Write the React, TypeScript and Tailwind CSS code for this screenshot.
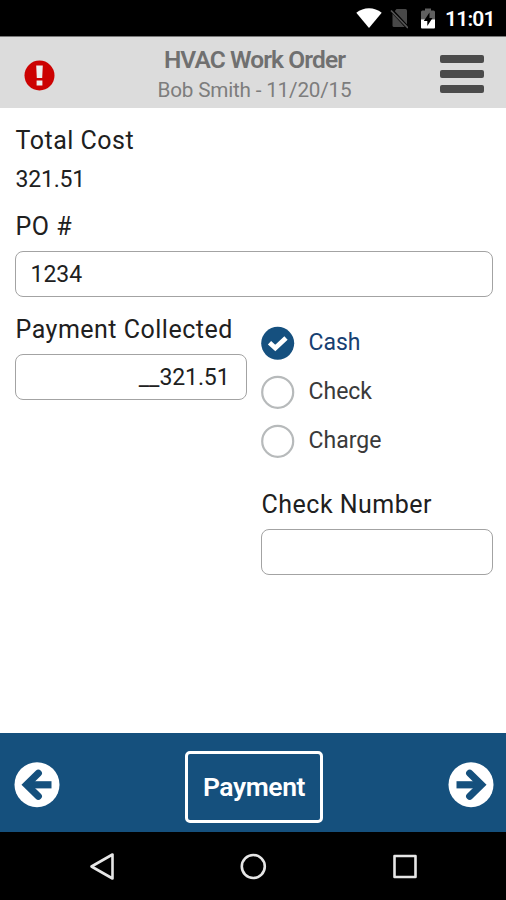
import React from "react";

interface PaymentOption {
  label: string;
  selected: boolean;
}

const paymentOptions: PaymentOption[] = [
  { label: "Cash", selected: true },
  { label: "Check", selected: false },
  { label: "Charge", selected: false },
];

function StatusBar() {
  return (
    <div className="flex h-9 shrink-0 bg-black pl-[356px] text-white">
      {/* Wifi */}
      <svg className="mt-2 h-5 w-[26px]" viewBox="0 0 26 20" fill="#fff">
        <path d="M13 20 0.3 4.8C4 1.8 8.300 0.300 13 0.300S22 1.800 25.700 4.800Z" />
      </svg>
      {/* No SIM */}
      <svg className="mt-2 ml-2 h-[21px] w-[18px]" viewBox="0 0 18 21">
        <path d="M6.500 1H15.500Q17 1 17 2.500V17.500Q17 19 15.500 19H4Q2.500 19 2.500 17.500V6Z" fill="#484848" />
        <path d="M0 0.500 18 20" stroke="#000" strokeWidth="3.500" />
        <path d="M1 2.500 18 20" stroke="#555" strokeWidth="1.700" />
      </svg>
      {/* Battery */}
      <svg className="mt-2 ml-3 h-[21px] w-4" viewBox="0 0 16 21">
        <path d="M5 0.500H11V2.500H13.500Q15 2.500 15 4V12H1V4Q1 2.500 2.500 2.500H5Z" fill="#606060" />
        <path d="M1 11.500H15V19.500Q15 20.500 14 20.500H2Q1 20.500 1 19.500Z" fill="#fff" />
        <path d="M9.500 4.500 3.800 13H7.300V18L12.500 10H9.500Z" fill="#000" />
      </svg>
      <span className="mt-[7px] ml-[9px] text-[21px] leading-6 font-semibold tracking-[-0.800px]">11:01</span>
    </div>
  );
}

function Header() {
  return (
    <header className="flex h-[72px] shrink-0 items-start justify-between border-t border-[#777] bg-[#dcdcdc] pr-[22px] pl-6">
      <svg className="mt-[23px] h-[31px] w-[31px]" viewBox="0 0 31 31">
        <circle cx="15.500" cy="15.500" r="15" fill="#cc0202" />
        <path d="M12.200 5.500H18.800L18.200 18H12.800ZM12.600 20.500H18.400V25.500H12.600Z" fill="#eee" />
      </svg>
      <div className="mt-2 flex flex-col items-center pl-[14px] whitespace-nowrap">
        <h1 className="text-[24.500px] leading-[30px] font-semibold tracking-[-0.900px] text-[#707070]">HVAC Work Order</h1>
        <p className="text-[20.700px] leading-[30px] tracking-[-0.200px] text-[#7d7d7d]">Bob Smith - 11/20/15</p>
      </div>
      <div className="mt-[18px] flex w-11 flex-col gap-[7px]">
        <span className="h-2 rounded-[2px] bg-[#4b4b4b]" />
        <span className="h-2 rounded-[2px] bg-[#4b4b4b]" />
        <span className="h-2 rounded-[2px] bg-[#4b4b4b]" />
      </div>
    </header>
  );
}

function RadioMark({ selected }: { selected: boolean }) {
  return (
    <svg className="h-[34px] w-[34px]" viewBox="0 0 34 34">
      {selected ? (
        <>
          <circle cx="16.700" cy="17.300" r="16.500" fill="#15507f" />
          <path d="M8.500 16.800 14.300 22 25 12" fill="none" stroke="#fff" strokeWidth="4.800" />
        </>
      ) : (
        <circle cx="16.700" cy="17.300" r="15.500" fill="#fff" stroke="#b7babb" strokeWidth="2.200" />
      )}
    </svg>
  );
}

function ArrowButton({ direction }: { direction: "left" | "right" }) {
  return (
    <button className="block" aria-label={direction === "left" ? "Back" : "Next"}>
      <svg className={direction === "left" ? "h-[46px] w-[46px]" : "h-[46px] w-[46px] -scale-x-100"} viewBox="0 0 46 46">
        <circle cx="23" cy="22.700" r="22.500" fill="#fff" />
        <path d="M12 22.800H37.500" stroke="#15507d" strokeWidth="7.200" />
        <path d="M24.300 11.300 12.600 22.800 24.300 34.300" fill="none" stroke="#15507d" strokeWidth="7.200" strokeLinecap="round" strokeLinejoin="miter" />
      </svg>
    </button>
  );
}

export default function App() {
  return (
    <div className="flex h-[900px] w-[506px] flex-col overflow-hidden bg-white font-['Roboto',sans-serif] text-[#202020]">
      <StatusBar />
      <Header />

      <main className="flex-1 pr-[13px] pl-[14.500px]">
        <div className="pt-[17px] pl-px text-[25px] leading-8 tracking-[0.5px]">Total Cost</div>
        <div className="mt-2 pl-px text-[23px] leading-[30px] tracking-[-0.200px]">321.51</div>
        <div className="mt-4 pl-px text-[25px] leading-8 tracking-[0.5px]">PO #</div>
        <div className="mt-2 flex h-[46px] items-center rounded-lg border-[1.500px] border-[#a3a3a3] px-[15px] pt-[2px] text-[23px]">1234</div>

        <div className="mt-[17px] flex gap-[14px]">
          <section className="w-[232px]">
            <div className="pl-px text-[25px] leading-8 tracking-[0.5px] whitespace-nowrap">Payment Collected</div>
            <div className="mt-2 flex h-[46px] items-center justify-end rounded-lg border-[1.500px] border-[#a3a3a3] px-4 pt-[3px] text-[23px] tracking-[-0.100px]">
              __321.51
            </div>
          </section>
          <section className="w-[232px]">
            <div className="mt-3 flex flex-col gap-[15px]">
              {paymentOptions.map((option) => (
                <div key={option.label} className="flex h-[34px] items-center gap-[14px]">
                  <RadioMark selected={option.selected} />
                  <span className={option.selected ? "text-[23px] text-[#173f72]" : "text-[23px] text-[#3a3a3a]"}>
                    {option.label}
                  </span>
                </div>
              ))}
            </div>
            <div className="mt-[31px] pl-px text-[25px] leading-8 tracking-[0.5px]">Check Number</div>
            <div className="mt-2 h-[46px] rounded-lg border-[1.500px] border-[#a3a3a3]" />
          </section>
        </div>
      </main>

      <footer className="flex h-[99px] shrink-0 items-center justify-between bg-[#15507d] px-3 pt-[9px]">
        <div className="mb-[5px] pl-[2px]"><ArrowButton direction="left" /></div>
        <button className="h-[72px] w-[138px] rounded-[5px] border-[3px] border-white text-[26.500px] font-semibold tracking-[-0.400px] text-white">
          Payment
        </button>
        <div className="mb-[5px]"><ArrowButton direction="right" /></div>
      </footer>

      {/* Android navigation keys */}
      <nav className="flex h-[68px] shrink-0 items-center justify-between bg-black pr-[88px] pl-[88px]">
        <svg className="h-7 w-7" viewBox="0 0 28 28" fill="none" stroke="#e6e6e6" strokeWidth="2.600" strokeLinejoin="round">
          <path d="M3.500 14.500 24.500 2.500V26.500Z" />
        </svg>
        <svg className="h-7 w-7" viewBox="0 0 28 28" fill="none" stroke="#e6e6e6" strokeWidth="2.600">
          <circle cx="14.300" cy="14.500" r="11.500" />
        </svg>
        <svg className="h-7 w-7" viewBox="0 0 28 28" fill="none" stroke="#e6e6e6" strokeWidth="2.600" strokeLinejoin="round">
          <rect x="4.500" y="4" width="21" height="21" />
        </svg>
      </nav>
    </div>
  );
}
